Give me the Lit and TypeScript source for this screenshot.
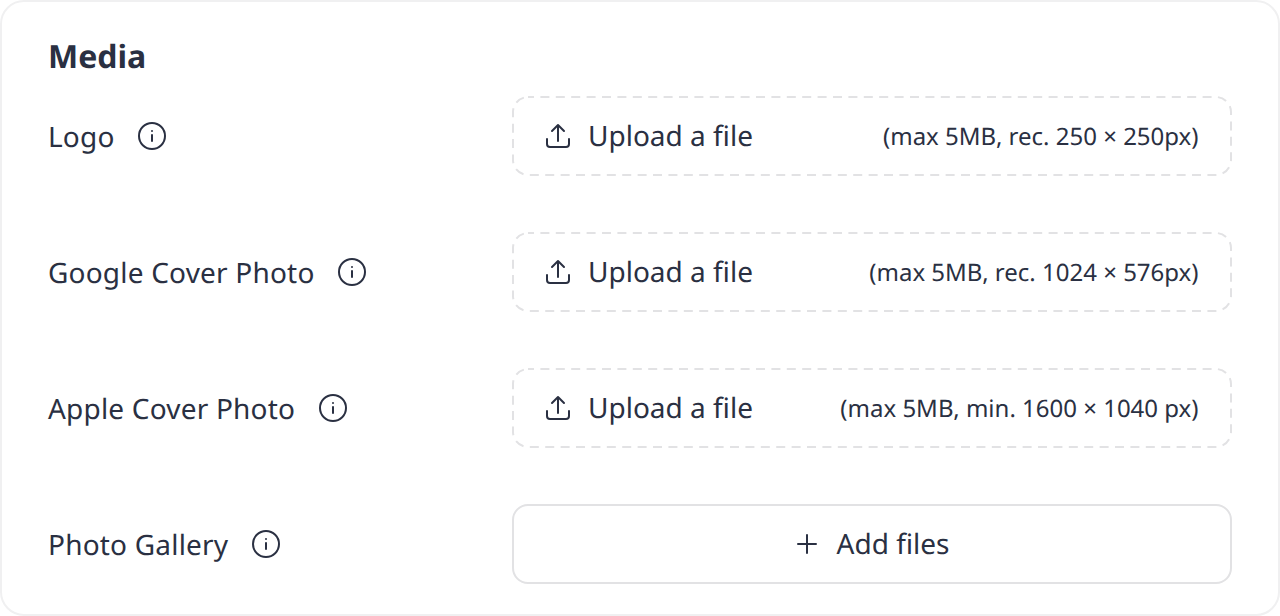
import { LitElement, html, css } from "lit";
import { customElement } from "lit/decorators.js";

const rows = [
  { label: "Logo", hint: "(max 5MB, rec. 250 × 250px)" },
  { label: "Google Cover Photo", hint: "(max 5MB, rec. 1024 × 576px)" },
  { label: "Apple Cover Photo", hint: "(max 5MB, min. 1600 × 1040 px)" },
];

const infoIcon = html`<svg width="28" height="28" viewBox="0 0 28 28" fill="none" stroke="currentColor" stroke-width="2" stroke-linecap="round">
  <circle cx="14" cy="14" r="13"></circle>
  <path d="M14 13v6"></path>
  <circle cx="14" cy="9" r="1" fill="currentColor" stroke="none"></circle>
</svg>`;

const uploadIcon = html`<svg class="icon" width="28" height="28" viewBox="0 0 28 28" fill="none" stroke="currentColor" stroke-width="2" stroke-linecap="round" stroke-linejoin="round">
  <path d="M3 17v5a3 3 0 0 0 3 3h16a3 3 0 0 0 3-3v-5"></path>
  <path d="M14 19V3M8 9l6-6 6 6"></path>
</svg>`;

const plusIcon = html`<svg class="icon" width="24" height="24" viewBox="0 0 24 24" fill="none" stroke="currentColor" stroke-width="2" stroke-linecap="round">
  <path d="M12 3v18M3 12h18"></path>
</svg>`;

// css dashed borders can't do the 9/6 dash rhythm, so the outline is drawn over the box
const dashedOutline = html`<svg class="outline" width="720" height="80" viewBox="0 0 720 80" fill="none">
  <rect x="1" y="1" width="718" height="78" rx="15" stroke="#e2e2e4" stroke-width="2" stroke-dasharray="9 6.4" stroke-dashoffset="3"></rect>
</svg>`;

@customElement("app-root")
export class AppRoot extends LitElement {
  static styles = css`
    :host {
      display: block;
      background: #fff;
      font-family: "Noto Sans", sans-serif;
      color: #2a3042;
      text-rendering: geometricPrecision;
    }

    .card {
      box-sizing: border-box;
      height: 616px;
      padding: 0 46px;
      background: #fff;
      border: 2px solid #f0f0f1;
      border-radius: 24px;
    }

    h2 {
      margin: 0;
      height: 94px;
      padding-top: 32px;
      box-sizing: border-box;
      font-size: 32px;
      line-height: 46px;
      font-weight: 700;
    }

    .rows {
      display: flex;
      flex-direction: column;
      gap: 56px;
    }

    .row {
      display: flex;
      align-items: center;
      justify-content: space-between;
    }

    .label {
      display: flex;
      align-items: center;
      gap: 23.4px;
      font-size: 28px;
      letter-spacing: 0.2px;
    }

    .label-text {
      padding-top: 2px;
    }

    .drop {
      position: relative;
      box-sizing: border-box;
      width: 720px;
      height: 80px;
      display: flex;
      align-items: center;
      padding: 0 31.5px 0 30px;
      border: 2px solid transparent;
      border-radius: 16px;
    }

    .outline {
      position: absolute;
      top: -2px;
      left: -2px;
    }

    .icon {
      margin-right: 16px;
    }

    .upload {
      font-size: 28px;
    }

    .hint {
      margin-left: auto;
      font-size: 24px;
    }

    .add {
      border-color: #e2e2e4;
      padding: 0 30px;
      justify-content: center;
      font-size: 28px;
    }

    .add .icon {
      margin-right: 18px;
    }
  `;

  render() {
    return html`<div class="card">
      <h2>Media</h2>
      <div class="rows">
        ${rows.map(
          (r) => html`<div class="row">
            <div class="label"><span class="label-text">${r.label}</span>${infoIcon}</div>
            <div class="drop">
              ${dashedOutline}${uploadIcon}<span class="upload">Upload a file</span>
              <span class="hint">${r.hint}</span>
            </div>
          </div>`
        )}
        <div class="row">
          <div class="label"><span class="label-text">Photo Gallery</span>${infoIcon}</div>
          <div class="drop add">${plusIcon}<span>Add files</span></div>
        </div>
      </div>
    </div>`;
  }
}
